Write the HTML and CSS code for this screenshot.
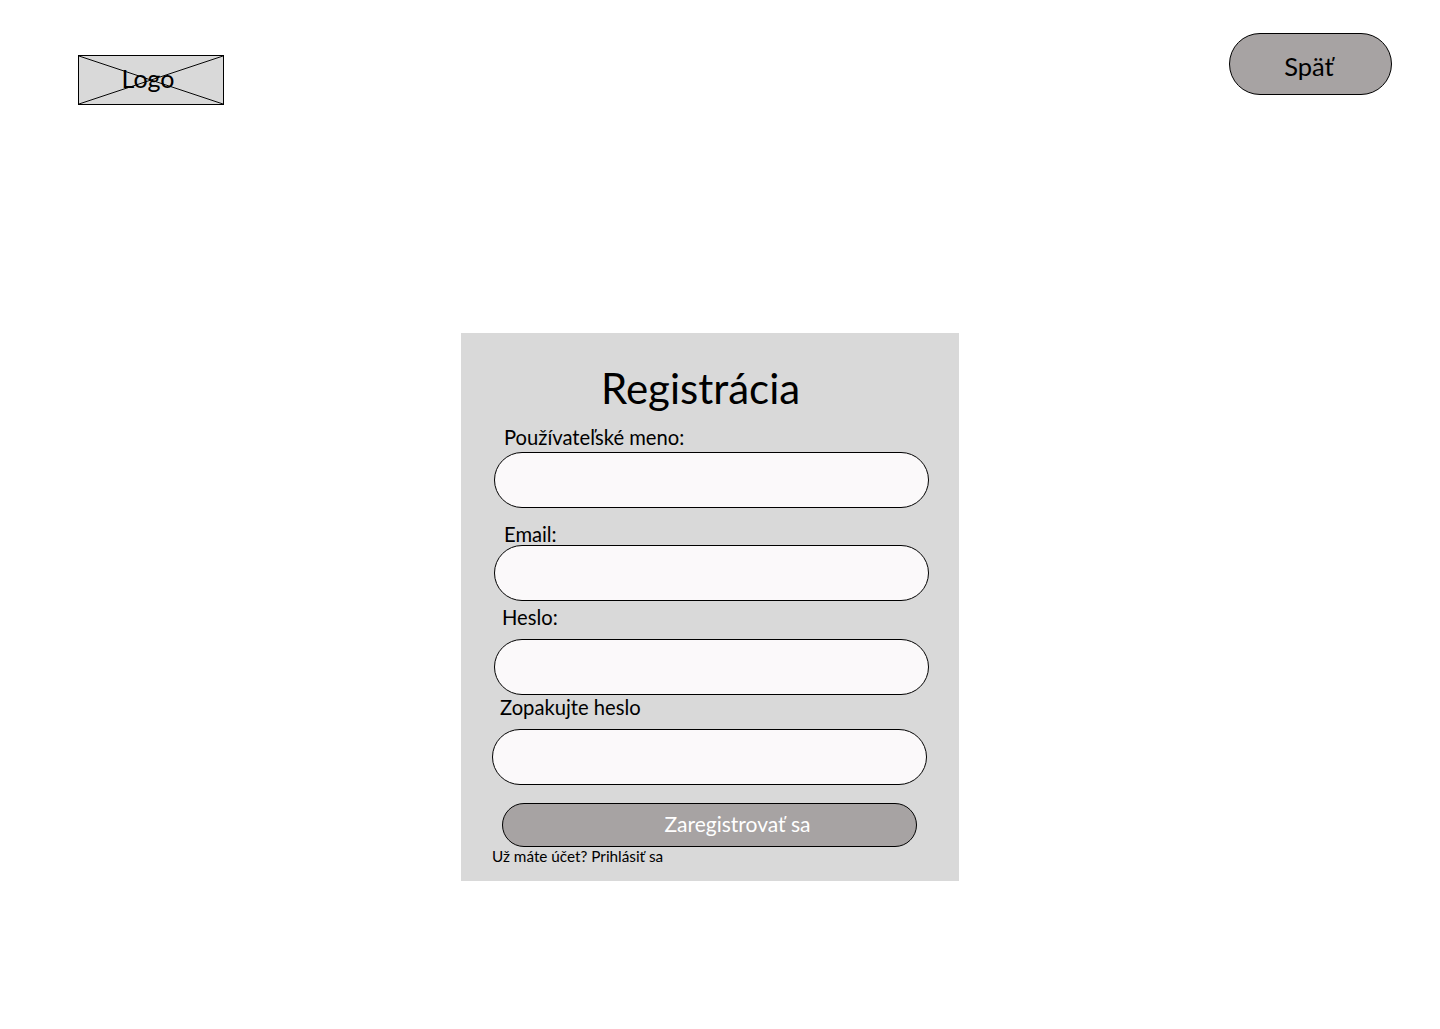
FILE: index.html
```html
<!DOCTYPE html>
<html>
  <head>
    <title>Registrácia</title>
    <link rel="stylesheet" href="styles.css">
  </head>
  <body>
    <header class="top-bar">
      <div class="logo">
        <svg class="logo-cross" viewBox="0 0 146 50" preserveAspectRatio="none">
          <line x1="0" y1="0" x2="146" y2="50" />
          <line x1="146" y1="0" x2="0" y2="50" />
        </svg>
        <span class="logo-text">Logo</span>
      </div>
      <a class="back-btn">Späť</a>
    </header>

    <form class="card">
      <h1 class="card-title">Registrácia</h1>

      <label class="field-label label-user" for="username">Používateľské meno:</label>
      <input class="field-input input-user" id="username" type="text" />

      <label class="field-label label-email" for="email">Email:</label>
      <input class="field-input input-email" id="email" type="text" />

      <label class="field-label label-pass" for="password">Heslo:</label>
      <input class="field-input input-pass" id="password" type="password" />

      <label class="field-label label-repeat" for="repeat">Zopakujte heslo</label>
      <input class="field-input input-repeat" id="repeat" type="password" />

      <button class="submit-btn" type="button">Zaregistrovať sa</button>
      <p class="login-note">Už máte účet? Prihlásiť sa</p>
    </form>
  </body>
</html>
```

FILE: styles.css
```css
body {
  font-family: Lato, "Noto Sans", sans-serif;
  margin: 0;
  background: #ffffff;
  color: #000000;
}

.top-bar {
  display: flex;
  justify-content: space-between;
  align-items: flex-start;
  padding: 33px 48px 0 78px;
}

.logo {
  position: relative;
  box-sizing: border-box;
  width: 146px;
  height: 50px;
  margin-top: 22px;
  border: 1px solid #000000;
  background: #d9d9d9;
  display: flex;
  align-items: center;
  justify-content: center;
}

.logo-cross {
  position: absolute;
  top: 0;
  left: 0;
  width: 100%;
  height: 100%;
}

.logo-cross line {
  stroke: #000000;
  stroke-width: 1;
}

.logo-text {
  position: relative;
  font-size: 25px;
  margin: 0 6px 4px 0;
}

.back-btn {
  box-sizing: border-box;
  width: 163px;
  height: 62px;
  padding: 4px 3px 0 0;
  border: 1px solid #000000;
  border-radius: 31px;
  background: #a7a3a3;
  font-size: 25.5px;
  display: flex;
  align-items: center;
  justify-content: center;
}

.card {
  box-sizing: border-box;
  width: 498px;
  height: 548px;
  margin: 228px 0 0 461px;
  padding-top: 29px;
  background: #d9d9d9;
}

.card-title {
  margin: 0 0 0 140px;
  font-size: 42px;
  font-weight: 400;
  line-height: 52px;
}

.field-label {
  display: block;
  font-size: 20.2px;
  line-height: 24px;
}

.field-input {
  display: block;
  box-sizing: border-box;
  width: 435px;
  height: 56px;
  margin-left: 33px;
  padding: 0 24px;
  border: 1px solid #000000;
  border-radius: 28px;
  background: #fbf9fa;
}

.label-user {
  margin: 11px 0 3px 43px;
}

.label-email {
  margin: 14px 0 -1px 43px;
}

.label-pass {
  margin: 4px 0 10px 41px;
}

.label-repeat {
  margin: 0 0 10px 39px;
}

.input-repeat {
  margin-left: 31px;
}

.submit-btn {
  display: block;
  box-sizing: border-box;
  width: 415px;
  height: 44px;
  margin: 18px 0 0 41px;
  padding: 0 0 4px 56px;
  border: 1px solid #000000;
  border-radius: 22px;
  background: #a7a3a3;
  color: #ffffff;
  font-family: inherit;
  font-size: 21px;
}

.login-note {
  margin: -1px 0 0 31px;
  font-size: 15.3px;
  line-height: 20px;
}
```
